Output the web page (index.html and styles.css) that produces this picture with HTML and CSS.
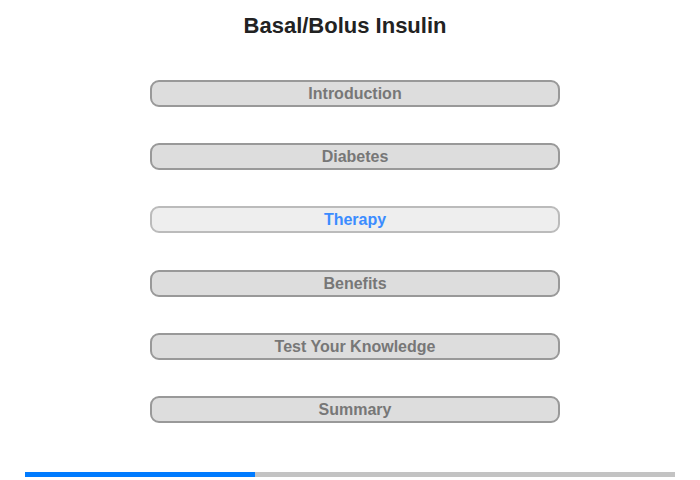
FILE: index.html
```html
<!DOCTYPE html>
<html>
<head>
<meta charset="utf-8">
<link rel="stylesheet" href="styles.css">
</head>
<body>
<div class="page">
  <h1 class="title">Basal/Bolus Insulin</h1>
  <nav class="menu">
    <div class="item">Introduction</div>
    <div class="item">Diabetes</div>
    <div class="item active">Therapy</div>
    <div class="item">Benefits</div>
    <div class="item">Test Your Knowledge</div>
    <div class="item">Summary</div>
  </nav>
  <div class="progress"><div class="progress-fill" style="width:230px"></div></div>
</div>
</body>
</html>
```
FILE: styles.css
```css
html, body {
  margin: 0;
  padding: 0;
  background: #fff;
}
.page {
  width: 700px;
  height: 480px;
  font-family: "Liberation Sans", Arial, sans-serif;
  display: flex;
  flex-direction: column;
}
.title {
  margin: 0;
  padding: 13px 10px 0 0;
  font-size: 22px;
  line-height: 25px;
  font-weight: bold;
  color: #222;
  text-align: center;
}
.menu {
  margin: 42px 0 0 150px;
  width: 410px;
  display: flex;
  flex-direction: column;
  gap: 36.2px;
}
.item {
  box-sizing: border-box;
  height: 27px;
  border: 2px solid #999;
  border-radius: 9px;
  background: #ddd;
  color: #777;
  font-size: 16px;
  font-weight: bold;
  line-height: 23px;
  text-align: center;
}
.item.active {
  background: #eee;
  border-color: #bbb;
  color: #3b8cff;
}
.progress {
  margin: 49px 0 0 25px;
  width: 650px;
  height: 5px;
  background: #c3c3c3;
}
.progress-fill {
  height: 100%;
  background: #007bff;
}
```
